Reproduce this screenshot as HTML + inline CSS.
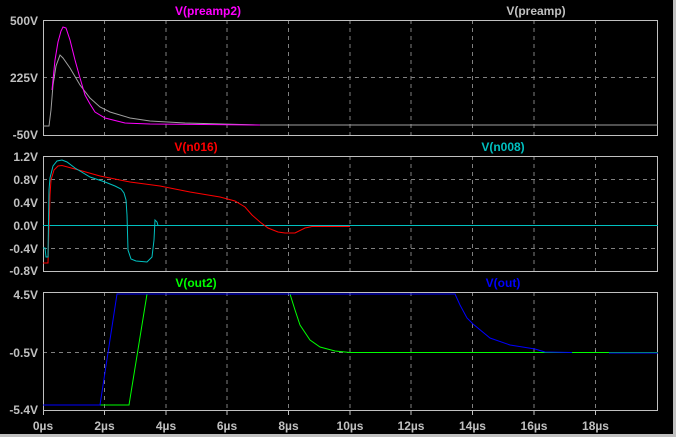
<!DOCTYPE html>
<html><head><meta charset="utf-8"><style>
html,body{margin:0;padding:0;background:#000;}
svg{display:block}
text{font-family:"Liberation Sans",sans-serif;font-weight:bold;font-size:12px;}
</style></head><body>
<svg width="676" height="437" xmlns="http://www.w3.org/2000/svg">
<rect width="676" height="437" fill="#000"/>
<rect x="673" y="0" width="3" height="437" fill="#c0c0c0"/>
<rect x="0" y="434" width="676" height="3" fill="#c0c0c0"/>
<g stroke="#808080" stroke-dasharray="4,4" fill="none">
<path d="M104.5 20V135M166 20V135M227 20V135M288.5 20V135M350 20V135M411 20V135M472.5 20V135M534 20V135M595.5 20V135"/>
<path d="M104.5 156V271M166 156V271M227 156V271M288.5 156V271M350 156V271M411 156V271M472.5 156V271M534 156V271M595.5 156V271"/>
<path d="M104.5 292V410M166 292V410M227 292V410M288.5 292V410M350 292V410M411 292V410M472.5 292V410M534 292V410M595.5 292V410"/>
<path d="M43 77.5H658M43 179.5H658M43 202.5H658M43 248.5H658M43 352.5H658"/>
</g>
<g stroke="#c0c0c0" fill="none">
<rect x="43.5" y="20.5" width="614" height="115"/>
<rect x="43.5" y="156.5" width="614" height="115"/>
<rect x="43.5" y="292.5" width="614" height="118"/>
<path d="M43.5 410v5M104.5 410v5M166 410v5M227 410v5M288.5 410v5M350 410v5M411 410v5M472.5 410v5M534 410v5M595.5 410v5"/>
</g>
<g fill="#c0c0c0" text-anchor="end">
<text x="38" y="25">500V</text><text x="38" y="82">225V</text><text x="38" y="139">-50V</text>
<text x="38" y="161">1.2V</text><text x="38" y="184">0.8V</text><text x="38" y="207">0.4V</text><text x="38" y="230">0.0V</text><text x="38" y="253">-0.4V</text><text x="38" y="275">-0.8V</text>
<text x="38" y="299">4.5V</text><text x="38" y="357">-0.5V</text><text x="38" y="414">-5.4V</text>
</g>
<g fill="#c0c0c0" text-anchor="middle">
<text x="43" y="430">0µs</text><text x="104.5" y="430">2µs</text><text x="166" y="430">4µs</text><text x="227" y="430">6µs</text><text x="288.5" y="430">8µs</text><text x="350" y="430">10µs</text><text x="411" y="430">12µs</text><text x="472.5" y="430">14µs</text><text x="534" y="430">16µs</text><text x="595.5" y="430">18µs</text>
</g>
<g text-anchor="middle">
<text x="208" y="15" fill="#ff00ff">V(preamp2)</text>
<text x="536" y="15" fill="#c0c0c0">V(preamp)</text>
<text x="196" y="151" fill="#ff0000">V(n016)</text>
<text x="503" y="151" fill="#00c0c0">V(n008)</text>
<text x="196" y="287" fill="#00ff00">V(out2)</text>
<text x="503" y="287" fill="#0000ff">V(out)</text>
</g>
<g fill="none" stroke-width="1">
<path stroke="#a0a0a0" d="M43 126H49L51 110L53 85L56 66L60 55L63 58L70 68L80 85L90 98L100 107L110 112L130 118L150 121L185 123L260 125L658 125"/>
<path stroke="#ff00ff" d="M52 90L55 60L58 42L61 31L63 27L66 28L70 40L75 60L80 78L85 95L90 104L95 112L105 118L125 123L150 124L260 125"/>
<path stroke="#00c0c0" d="M43 225.5H658"/>
<path stroke="#ff0000" d="M43 263H48L50 195L51 180L54 170L58 166L62 165.5L75 169L100 176L130 182L160 186L190 192L220 197L235 201L245 207L252 215L260 222L268 228L278 232L285 233L295 233L305 228L312 226.5L350 226.5"/>
<path stroke="#00c0c0" d="M43 248L45 248L46 257L48 257L49 190L50 178L53 166L57 161L62 160L67 162L75 168L90 177L105 182L115 186L121 189L124 193L126 200L127 215L128 250L131 259L136 261L147 262L152 257L154 240L155 220L157 222L158 225.5"/>
<path stroke="#00ff00" d="M350 352.5H658M43 405H129L147 294H290L295 310L300 325L310 340L320 347L335 351L350 352.5"/>
<path stroke="#0000ff" d="M43 405H100L117 294H455L460 305L467 318L473 324L490 338L510 345L535 349L545 352L572 352.5M609 353H658"/>
</g>
</svg>
</body></html>
